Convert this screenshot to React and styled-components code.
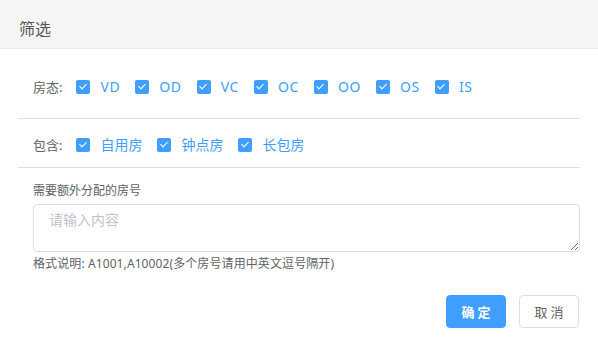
import React from "react"
import styled, { createGlobalStyle } from "styled-components"

const GlobalStyle = createGlobalStyle`
    body {
        margin: 0;
        background: #fff;
        font-family: "Noto Sans", "Noto Sans CJK SC", sans-serif;
    }
`

const Dialog = styled.div`
    width: 598px;
    height: 345px;
    background: #fff;
    overflow: hidden;
`

const Header = styled.div`
    padding: 20px 19px 10px;
    background: #f5f5f5;
    border-bottom: 1px solid #ececec;
    font-size: 16px;
    line-height: 18px;
    color: #555;
`

const Body = styled.div`
    padding: 0 18px;
`

const Row = styled.div`
    display: flex;
    align-items: center;
    padding: ${({ $pad }) => $pad};
    padding-left: 15px;
    border-bottom: 1px solid #dcdfe6;
`

const RowLabel = styled.span`
    font-size: 13px;
    line-height: 20px;
    color: #606266;
    margin-right: 14px;
`

const Check = styled.label`
    display: inline-flex;
    align-items: center;
    margin-right: 15px;
    cursor: pointer;
`

const Box = styled.span`
    position: relative;
    width: 14px;
    height: 14px;
    border-radius: 2px;
    background: #409eff;
    box-sizing: border-box;

    &::after {
        content: "";
        position: absolute;
        left: 4.5px;
        top: 2px;
        width: 3px;
        height: 6px;
        border: 1px solid #fff;
        border-left: 0;
        border-top: 0;
        transform: rotate(45deg);
    }
`

const CheckText = styled.span`
    padding-left: 10px;
    font-size: 14px;
    line-height: 20px;
    color: #409eff;
    letter-spacing: ${({ $latin }) => ($latin ? "0.6px" : "0")};
`

const Extra = styled.div`
    padding: 15px 18px 0 33px;
`

const FieldLabel = styled.div`
    font-size: 12px;
    line-height: 16px;
    color: #606266;
`

const TextArea = styled.textarea`
    display: block;
    width: 100%;
    height: 48px;
    margin-top: 5px;
    box-sizing: border-box;
    padding: 5px 15px;
    border: 1px solid #dcdfe6;
    border-radius: 4px;
    font-family: inherit;
    font-size: 14px;
    line-height: 20px;
    color: #606266;
    resize: vertical;
    outline: none;

    &::placeholder {
        color: #c0c4cc;
    }
`

const Hint = styled.div`
    margin-top: 4px;
    font-size: 12px;
    line-height: 16px;
    letter-spacing: 0.1px;
    color: #606266;
`

const Footer = styled.div`
    display: flex;
    justify-content: flex-end;
    gap: 13px;
    padding: 23px 19px 0;
`

const Button = styled.button`
    width: 60px;
    height: 33px;
    border-radius: 4px;
    font-family: inherit;
    font-size: 13px;
    letter-spacing: 3px;
    padding: 0 0 0 3px;
    cursor: pointer;
    border: 1px solid ${({ $primary }) => ($primary ? "#409eff" : "#dcdfe6")};
    background: ${({ $primary }) => ($primary ? "#409eff" : "#fff")};
    color: ${({ $primary }) => ($primary ? "#fff" : "#606266")};
    font-weight: ${({ $primary }) => ($primary ? 600 : 400)};
`

const statuses = ["VD", "OD", "VC", "OC", "OO", "OS", "IS"]
const includes = ["自用房", "钟点房", "长包房"]

const CheckItem = ({ text, latin }) => (
    <Check>
        <Box />
        <CheckText $latin={latin}>{text}</CheckText>
    </Check>
)

const App = () => {
    return (
        <Dialog>
            <GlobalStyle />
            <Header>筛选</Header>
            <Body>
                <Row $pad="28px 0 21px">
                    <RowLabel>房态:</RowLabel>
                    {statuses.map(s => <CheckItem key={s} text={s} latin />)}
                </Row>
                <Row $pad="16px 0 12px">
                    <RowLabel>包含:</RowLabel>
                    {includes.map(s => <CheckItem key={s} text={s} />)}
                </Row>
            </Body>
            <Extra>
                <FieldLabel>需要额外分配的房号</FieldLabel>
                <TextArea placeholder="请输入内容" />
                <Hint>格式说明: A1001,A10002(多个房号请用中英文逗号隔开)</Hint>
            </Extra>
            <Footer>
                <Button $primary>确定</Button>
                <Button>取消</Button>
            </Footer>
        </Dialog>
    )
}

export default App
